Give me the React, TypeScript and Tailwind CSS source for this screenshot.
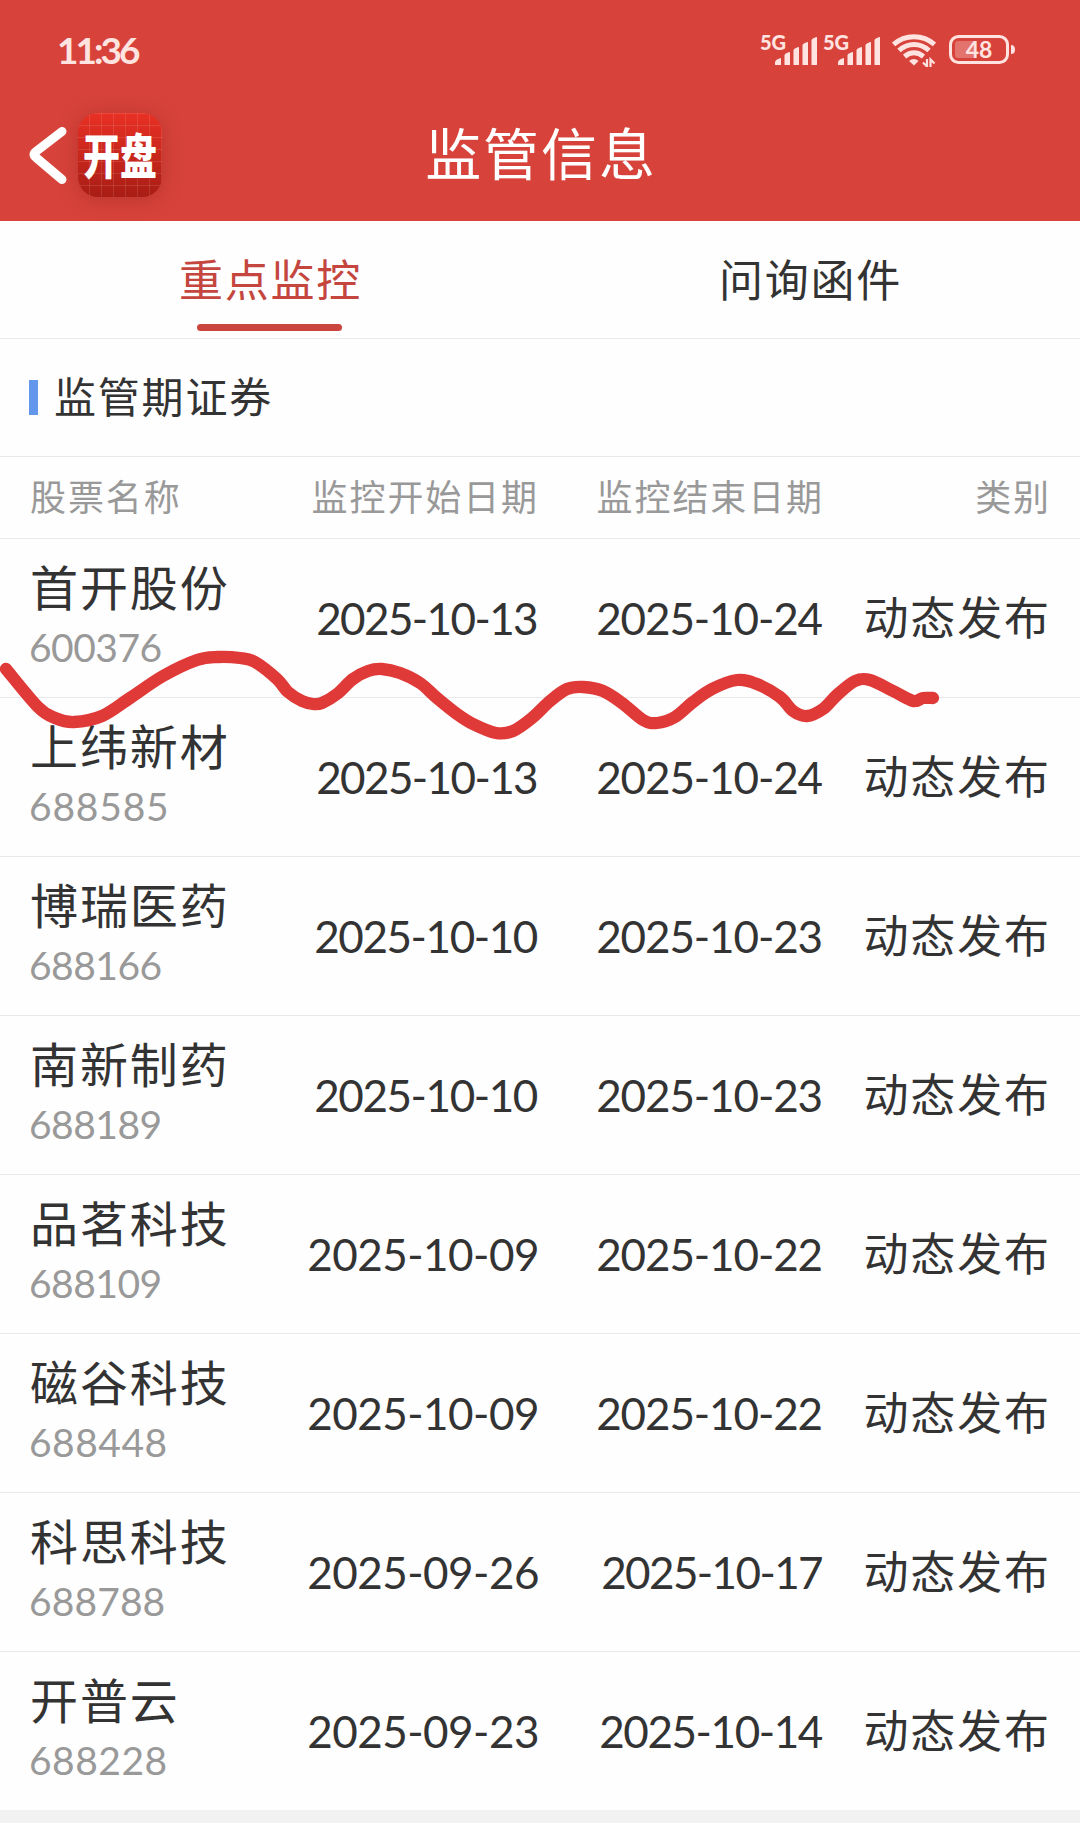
import React from "react";
import clsx from "clsx";

type Stock = {
  name: string;
  code: string;
  start: string;
  end: string;
  type: string;
};

const stocks: Stock[] = [
  { name: "首开股份", code: "600376", start: "2025-10-13", end: "2025-10-24", type: "动态发布" },
  { name: "上纬新材", code: "688585", start: "2025-10-13", end: "2025-10-24", type: "动态发布" },
  { name: "博瑞医药", code: "688166", start: "2025-10-10", end: "2025-10-23", type: "动态发布" },
  { name: "南新制药", code: "688189", start: "2025-10-10", end: "2025-10-23", type: "动态发布" },
  { name: "品茗科技", code: "688109", start: "2025-10-09", end: "2025-10-22", type: "动态发布" },
  { name: "磁谷科技", code: "688448", start: "2025-10-09", end: "2025-10-22", type: "动态发布" },
  { name: "科思科技", code: "688788", start: "2025-09-26", end: "2025-10-17", type: "动态发布" },
  { name: "开普云", code: "688228", start: "2025-09-23", end: "2025-10-14", type: "动态发布" },
];

const columns = "grid grid-cols-[259px_250px_285px_1fr] pl-[30px] pr-[29px]";

const Signal = () => (
  <svg width="58" height="32" viewBox="0 0 58 32" fill="currentColor" overflow="visible">
    <text x="0" y="15.500" className="font-['Lato',sans-serif] text-[20px] font-black">
      5G
    </text>
    <path d="M15 31v-3q1-3 6-4v7ZM24.500 31V21q1-2 5.500-3v13ZM33.500 31V16q1-2 5.500-3v18ZM42.500 31V11q1-2 5.500-3v23ZM51.500 31V6q1-2 5.500-3v28Z" />
  </svg>
);

const Wifi = () => (
  <svg width="44" height="34" viewBox="0 0 44 34" fill="none" stroke="currentColor" strokeWidth="5">
    <path d="M1.500 11.500C13 1 31 1 42.500 11.500" />
    <path d="M7 17.500C16 9.500 28 9.500 37 17.500" />
    <path d="M12.500 23.500C18.500 18.500 25.500 18.500 31.500 23.500" />
    <path d="M17 28q5-4 9.500 0L22 32.500Z" fill="currentColor" stroke="none" />
    <path d="M35 26v7.500l-4-4M38.500 34v-7.500l4 4" strokeWidth="2.200" />
  </svg>
);

const Battery = () => (
  <svg width="67" height="30" viewBox="0 0 67 30">
    <rect x="1.500" y="1.500" width="57" height="26" rx="8" fill="none" stroke="currentColor" strokeWidth="3" />
    <path d="M6 9q0-3 3-3h19v17H9q-3 0-3-3Z" fill="currentColor" opacity="0.3" />
    <path d="M62 10q4 0 4 4.500t-4 4.500Z" fill="currentColor" />
    <text x="30" y="22.500" textAnchor="middle" fill="currentColor" className="font-['Lato',sans-serif] text-[23px] font-bold">
      48
    </text>
  </svg>
);

const AppIcon = () => (
  <div className="flex h-21 w-21 items-center justify-center rounded-[20px] bg-[linear-gradient(90deg,transparent_11px,#ffffff1c_11px),linear-gradient(#ffffff1c_1px,transparent_1px),linear-gradient(#e93024,#a81d15)] bg-[length:12px_12px,12px_12px,100%_100%] shadow-[0_2px_20px_#8a1d1866]">
    <span className="-mt-1 scale-y-[1.3] text-[37px] leading-none font-black text-white">开盘</span>
  </div>
);

const Header = () => (
  <header className="h-[221px] bg-[#d7433b] text-white">
    <div className="flex h-25 items-center pl-[57px] pr-[64px] text-[#ffe3e1]">
      <span className="-mt-0.5 font-['Lato',sans-serif] text-[37px] leading-none font-bold tracking-[-3px]">11:36</span>
      <div className="ml-auto flex items-center">
        <Signal />
        <div className="ml-[5px]">
          <Signal />
        </div>
        <div className="ml-[11px]">
          <Wifi />
        </div>
        <div className="ml-[13px]">
          <Battery />
        </div>
      </div>
    </div>
    <div className="grid h-[110px] grid-cols-[1fr_auto_1fr] items-center">
      <div className="flex items-center pl-7">
        <svg width="40" height="58" viewBox="0 0 40 58" fill="none" stroke="currentColor" strokeWidth="9" strokeLinecap="round" strokeLinejoin="round">
          <path d="M34 5.500 8 25.500Q4 28.500 8 31.500L34 53.500" />
        </svg>
        <div className="ml-2.5">
          <AppIcon />
        </div>
      </div>
      <h1 className="-mt-2 ml-0.5 text-[56px] leading-none tracking-[1.9px]">监管信息</h1>
    </div>
  </header>
);

const Tabs = () => (
  <nav className="grid h-[118px] grid-cols-2 border-b border-[#e9e9e9] text-[44px] tracking-[1.7px]">
    <div className="flex flex-col items-center text-[#c4463e]">
      <span className="mt-[35px] ml-px leading-[44px]">重点监控</span>
      <span className="mt-6 mr-0.5 h-[7px] w-[145px] rounded-full bg-[#c9453e]"></span>
    </div>
    <div className="flex flex-col items-center">
      <span className="mt-[35px] ml-px leading-[44px]">问询函件</span>
    </div>
  </nav>
);

// narrow "1" digits make some dates run tighter than others
const dateTracking = (value: string) => {
  if (/10-(13|17)$/.test(value)) return "tracking-[-1.6px] pr-0.5";
  if (/10-1\d$|10-10$/.test(value)) return "tracking-[-1.4px] pr-0.5";
  if (/10-2\d$/.test(value)) return "tracking-[-1.1px] pr-0.5";
  return "tracking-[-0.5px]";
};

const codeTracking = (code: string) => {
  if (code === "688585") return "tracking-[0.8px]";
  if (/^688(448|228)$/.test(code)) return "tracking-[0.5px]";
  if (code === "688788") return "tracking-[0.1px]";
  return "tracking-[-0.5px]";
};

const DateCell = ({ value }: { value: string }) => (
  <span className={clsx("text-right font-['Lato',sans-serif] text-[44px]", dateTracking(value))}>{value}</span>
);

const StockRow = ({ data, last }: { data: Stock; last: boolean }) => (
  <div className={clsx(columns, "items-center leading-none", last ? "h-[158px]" : "h-[159px] border-b border-[#e9e9e9]")}>
    <div className="-mt-2.5">
      <div className="text-[48px] tracking-[1.9px]">{data.name}</div>
      <div className={clsx("mt-[18px] -mb-0.5 -ml-px font-['Lato',sans-serif] text-[39px] leading-[40px] text-[#999]", codeTracking(data.code))}>
        {data.code}
      </div>
    </div>
    <DateCell value={data.start} />
    <DateCell value={data.end} />
    <span className="-mt-1.5 text-right text-[45px] tracking-[1.9px]">{data.type}</span>
  </div>
);

// points of the hand-drawn marker stroke between the first two rows
const stroke = [
  [6, 669], [38, 707], [55, 718], [74, 722], [102, 716], [130, 698], [163, 676], [197, 660],
  [218, 657], [240, 658], [255, 662], [277, 679], [288, 692], [302, 701], [313, 704], [322, 703],
  [337, 694], [353, 679], [368, 671], [382, 669], [400, 673], [420, 683], [437, 698], [457, 714],
  [473, 724], [496, 733], [513, 731], [532, 718], [550, 701], [567, 689], [583, 687], [603, 691],
  [622, 703], [643, 720], [657, 723], [675, 717], [693, 702], [712, 689], [737, 680], [757, 684],
  [780, 697], [793, 711], [807, 716], [823, 709], [837, 695], [855, 681], [870, 680], [893, 691],
  [913, 701], [923, 698], [933, 698],
];

const smooth = (pts: number[][]) =>
  pts.slice(1).reduce((d, p, i) => {
    const prev = pts[i];
    const before = pts[i - 1] ?? prev;
    const after = pts[i + 2] ?? p;
    const c1 = [prev[0] + (p[0] - before[0]) / 6, prev[1] + (p[1] - before[1]) / 6];
    const c2 = [p[0] - (after[0] - prev[0]) / 6, p[1] - (after[1] - prev[1]) / 6];
    return `${d}C${c1} ${c2} ${p}`;
  }, `M${pts[0]}`);

const App = () => {
  return (
    <div className="relative h-[1823px] w-[1080px] overflow-hidden bg-[#f2f2f2] font-['Noto_Sans_CJK_SC',sans-serif] text-[#333]">
      <Header />
      <main className="bg-[#fefefe]">
        <Tabs />
        <div className="flex h-[118px] items-center border-b border-[#e9e9e9] pl-[29px]">
          <span className="h-[35px] w-[9px] bg-[#6397ec]"></span>
          <h2 className="-mt-[5px] ml-4 text-[42px] leading-none tracking-[1.8px]">监管期证券</h2>
        </div>
        <div className={clsx(columns, "h-[82px] items-center border-b border-[#e9e9e9] pb-[5px] text-4xl leading-none tracking-[1.9px] text-[#999]")}>
          <span>股票名称</span>
          <span className="text-right">监控开始日期</span>
          <span className="text-right">监控结束日期</span>
          <span className="text-right">类别</span>
        </div>
        {stocks.map((stock, i) => (
          <StockRow data={stock} last={i === stocks.length - 1} key={stock.code} />
        ))}
      </main>
      <svg className="absolute top-0 left-0" width="1080" height="1823" fill="none" stroke="#e03a38" strokeWidth="12.300" strokeLinecap="round" strokeLinejoin="round">
        <path d={smooth(stroke)} />
      </svg>
    </div>
  );
};

export default App;
